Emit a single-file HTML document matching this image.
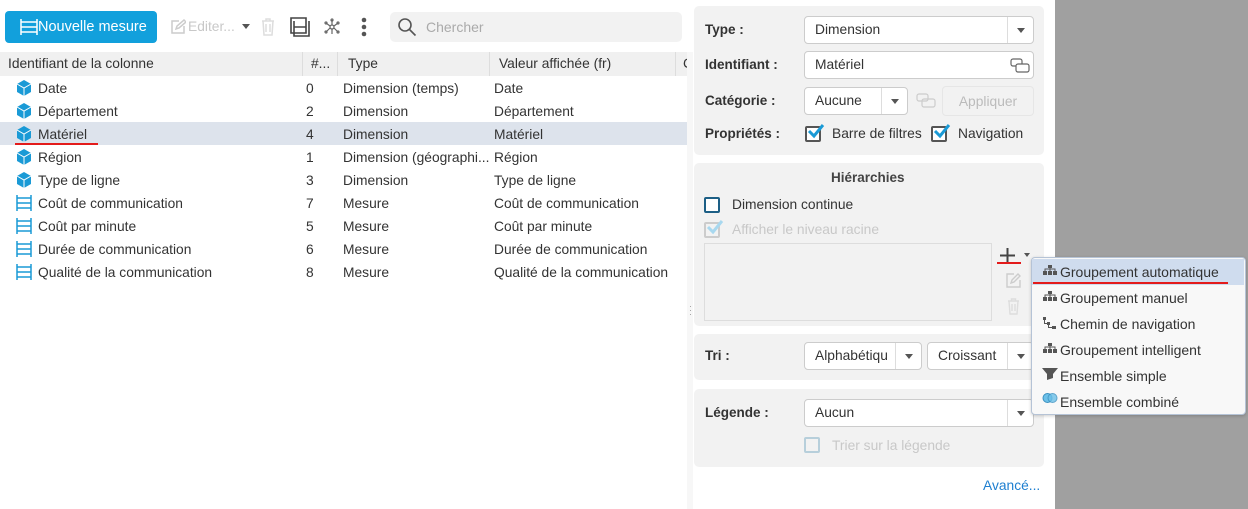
<!DOCTYPE html>
<html><head><meta charset="utf-8"><style>
*{margin:0;padding:0;box-sizing:border-box}
body{width:1248px;height:509px;overflow:hidden;background:#fff;font-family:"Liberation Sans",sans-serif;font-size:13.8px;color:#333;position:relative}
.a{position:absolute;white-space:nowrap}
.row{position:absolute;left:0;width:687px;height:23px;line-height:23px}
.row span{position:absolute;white-space:nowrap}
.panel{position:absolute;left:694px;width:350px;background:#f2f2f2;border-radius:5px}
.lbl{position:absolute;font-weight:bold;color:#333;font-size:13.5px}
.inp{position:absolute;background:#fff;border:1px solid #ccc;border-radius:4px;height:28px;line-height:26px;padding-left:10px;white-space:nowrap}
.dd{position:absolute;right:0;top:0;width:26px;height:26px;border-left:1px solid #ddd}
.dd:after{content:"";position:absolute;left:9px;top:11px;border:4px solid transparent;border-top:5px solid #555}
.cb{position:absolute;width:16px;height:16px;border:2px solid #555;border-radius:2px;background:#fff}
.mi{position:absolute;left:1033px;width:211px;height:26px;line-height:26px;padding-left:27px;color:#333;font-size:14px}
</style></head><body>
<div class="a" style="left:5px;top:11px;width:152px;height:32px;background:#12a0dc;border-radius:4px;color:#fff;font-size:14.5px;line-height:32px;padding-left:33px">Nouvelle mesure</div>
<svg class="a" style="left:20px;top:18px" width="18" height="18" viewBox="0 0 18 18" fill="none" stroke="#fff" stroke-width="1.5"><path d="M1 1v16M17 1v16M1 4h16M1 9h16M1 14h16"/></svg>
<svg class="a" style="left:170px;top:19px" width="16" height="16" viewBox="0 0 16 16" fill="none" stroke="#ccc" stroke-width="1.5"><path d="M9 2H2v12h12V7M6 10l1-3 7-6 2 2-7 6z"/></svg>
<div class="a" style="left:188px;top:19px;color:#c8c8c8">Editer...</div>
<div class="a" style="left:242px;top:24px;border:4px solid transparent;border-top:5px solid #555"></div>
<svg class="a" style="left:261px;top:18px" width="14" height="18" viewBox="0 0 14 18" fill="none" stroke="#ddd" stroke-width="1.5"><path d="M1 3h12M5 3V1h4v2M2 3l1 14h8l1-14M5 6v8M9 6v8"/></svg>
<svg class="a" style="left:290px;top:17px" width="20" height="20" viewBox="0 0 20 20" fill="none" stroke="#444" stroke-width="1.6"><path d="M1 1h15v15H1zM4 4v15h15V4M4 10h12"/></svg>
<svg class="a" style="left:323px;top:18px" width="18" height="18" viewBox="0 0 18 18" fill="none" stroke="#666" stroke-width="1.2"><circle cx="9" cy="9" r="2"/><path d="M9 7V2M9 11v5M7 8L3 5M11 8l4-3M7 10l-4 4M11 10l4 4"/><circle cx="9" cy="2" r="1"/><circle cx="3" cy="5" r="1"/><circle cx="15" cy="5" r="1"/><circle cx="3" cy="14" r="1"/><circle cx="15" cy="14" r="1"/></svg>
<svg class="a" style="left:360px;top:17px" width="8" height="20"><circle cx="4" cy="3" r="2.3" fill="#555"/><circle cx="4" cy="10" r="2.3" fill="#555"/><circle cx="4" cy="17" r="2.3" fill="#555"/></svg>
<div class="a" style="left:390px;top:12px;width:292px;height:30px;background:#f2f2f2;border-radius:5px"></div>
<svg class="a" style="left:397px;top:17px" width="20" height="20" viewBox="0 0 20 20" fill="none" stroke="#555" stroke-width="1.6"><circle cx="8" cy="8" r="6"/><path d="M12.5 12.5l6 6"/></svg>
<div class="a" style="left:426px;top:19px;color:#aaa;font-size:14px">Chercher</div>
<div class="a" style="left:0;top:52px;width:687px;height:24px;background:#f0f0f0"></div>
<div class="a" style="left:302px;top:52px;width:1px;height:24px;background:#ddd"></div>
<div class="a" style="left:337px;top:52px;width:1px;height:24px;background:#ddd"></div>
<div class="a" style="left:489px;top:52px;width:1px;height:24px;background:#ddd"></div>
<div class="a" style="left:675px;top:52px;width:1px;height:24px;background:#ddd"></div>
<div class="a" style="left:8px;top:56px">Identifiant de la colonne</div>
<div class="a" style="left:311px;top:56px">#...</div>
<div class="a" style="left:348px;top:56px">Type</div>
<div class="a" style="left:499px;top:56px">Valeur affichée (fr)</div>
<div class="a" style="left:683px;top:56px;width:4px;overflow:hidden">C</div>
<div class="a" style="left:687px;top:52px;width:6px;height:457px;background:#f7f7f7"></div>
<div class="a" style="left:689px;top:304px;color:#999;font-size:9px;line-height:4px">·<br>·<br>·</div>
<div class="a" style="left:0;top:122px;width:687px;height:23px;background:#dde3ec"></div>
<div class="a" style="left:15px;top:143px;width:83px;height:2px;background:#e31b1b"></div>
<div class="row" style="top:77px"><span style="left:38px">Date</span><span style="left:306px">0</span><span style="left:343px">Dimension (temps)</span><span style="left:494px">Date</span></div>
<div class="row" style="top:100px"><span style="left:38px">Département</span><span style="left:306px">2</span><span style="left:343px">Dimension</span><span style="left:494px">Département</span></div>
<div class="row" style="top:123px"><span style="left:38px">Matériel</span><span style="left:306px">4</span><span style="left:343px">Dimension</span><span style="left:494px">Matériel</span></div>
<div class="row" style="top:146px"><span style="left:38px">Région</span><span style="left:306px">1</span><span style="left:343px;width:146px;overflow:hidden">Dimension (géographi...</span><span style="left:494px">Région</span></div>
<div class="row" style="top:169px"><span style="left:38px">Type de ligne</span><span style="left:306px">3</span><span style="left:343px">Dimension</span><span style="left:494px">Type de ligne</span></div>
<div class="row" style="top:192px"><span style="left:38px">Coût de communication</span><span style="left:306px">7</span><span style="left:343px">Mesure</span><span style="left:494px">Coût de communication</span></div>
<div class="row" style="top:215px"><span style="left:38px">Coût par minute</span><span style="left:306px">5</span><span style="left:343px">Mesure</span><span style="left:494px">Coût par minute</span></div>
<div class="row" style="top:238px"><span style="left:38px">Durée de communication</span><span style="left:306px">6</span><span style="left:343px">Mesure</span><span style="left:494px">Durée de communication</span></div>
<div class="row" style="top:261px"><span style="left:38px">Qualité de la communication</span><span style="left:306px">8</span><span style="left:343px">Mesure</span><span style="left:494px;width:181px;overflow:hidden">Qualité de la communication</span></div>
<svg class="a" style="left:16px;top:80px" width="16" height="200" viewBox="0 0 16 200">
<g id="c"><path d="M8 0L15 4v8l-7 4-7-4V4z" fill="#1a9ad6"/><path d="M1 4l7 4 7-4M8 8v8" stroke="#fff" stroke-width="1" fill="none"/></g>
<use href="#c" y="23"/><use href="#c" y="46"/><use href="#c" y="69"/><use href="#c" y="92"/>
</svg>
<svg class="a" style="left:16px;top:195px" width="16" height="90" viewBox="0 0 16 90" fill="none" stroke="#1a9ad6" stroke-width="1.5">
<g id="ab"><path d="M1 0v16M15 0v16M1 3h14M1 8h14M1 13h14"/></g>
<use href="#ab" y="23"/><use href="#ab" y="46"/><use href="#ab" y="69"/>
</svg>
<div class="panel" style="top:6px;height:149px"></div>
<div class="lbl" style="left:705px;top:22px">Type :</div>
<div class="inp" style="left:804px;top:16px;width:230px">Dimension<div class="dd"></div></div>
<div class="lbl" style="left:705px;top:57px">Identifiant :</div>
<div class="inp" style="left:804px;top:51px;width:230px">Matériel</div>
<svg class="a" style="left:1010px;top:57px" width="20" height="18" viewBox="0 0 20 18" fill="none" stroke="#666" stroke-width="1.2"><rect x="1" y="2" width="11" height="7" rx="2"/><rect x="6" y="7" width="13" height="8" rx="2" fill="#fff"/></svg>
<div class="lbl" style="left:705px;top:93px">Catégorie :</div>
<div class="inp" style="left:804px;top:87px;width:104px">Aucune<div class="dd"></div></div>
<svg class="a" style="left:916px;top:92px" width="20" height="18" viewBox="0 0 20 18" fill="none" stroke="#ccc" stroke-width="1.2"><rect x="1" y="2" width="11" height="7" rx="2"/><rect x="6" y="7" width="13" height="8" rx="2"/></svg>
<div class="a" style="left:942px;top:86px;width:92px;height:30px;border:1px solid #e6e6e6;border-radius:4px;color:#bbb;text-align:center;line-height:30px">Appliquer</div>
<div class="lbl" style="left:705px;top:126px">Propriétés :</div>
<div class="cb" style="left:805px;top:126px"></div>
<svg class="a" style="left:807px;top:124px" width="18" height="16" fill="none" stroke="#1a9ad6" stroke-width="3"><path d="M2 7l5 5 9-11"/></svg>
<div class="a" style="left:832px;top:126px">Barre de filtres</div>
<div class="cb" style="left:931px;top:126px"></div>
<svg class="a" style="left:933px;top:124px" width="18" height="16" fill="none" stroke="#1a9ad6" stroke-width="3"><path d="M2 7l5 5 9-11"/></svg>
<div class="a" style="left:958px;top:126px">Navigation</div>
<div class="panel" style="top:163px;height:163px"></div>
<div class="a" style="left:831px;top:170px;font-weight:bold;color:#444;font-size:13.5px">Hiérarchies</div>
<div class="cb" style="left:704px;top:197px;border-color:#1d5f86"></div>
<div class="a" style="left:732px;top:197px">Dimension continue</div>
<div class="cb" style="left:704px;top:222px;border-color:#ccc;background:#f2f2f2"></div>
<svg class="a" style="left:706px;top:220px" width="18" height="16" fill="none" stroke="#a8d8ef" stroke-width="3"><path d="M2 7l5 5 9-11"/></svg>
<div class="a" style="left:732px;top:222px;color:#c8c8c8">Afficher le niveau racine</div>
<div class="a" style="left:704px;top:243px;width:288px;height:78px;border:1px solid #ddd"></div>
<svg class="a" style="left:999px;top:247px" width="17" height="17" stroke="#444" stroke-width="2"><path d="M8.5 1v15M1 8.5h15"/></svg>
<div class="a" style="left:1024px;top:253px;border:3.5px solid transparent;border-top:4px solid #555"></div>
<div class="a" style="left:997px;top:262px;width:24px;height:2px;background:#e31b1b"></div>
<svg class="a" style="left:1006px;top:273px" width="15" height="15" fill="none" stroke="#ccc" stroke-width="1.4"><path d="M8 1H1v13h13V7M5 10l1-3 6-6 2 2-6 6z"/></svg>
<svg class="a" style="left:1007px;top:298px" width="13" height="17" fill="none" stroke="#ddd" stroke-width="1.4"><path d="M1 3h11M4.5 3V1h4v2M2 3l1 13h7l1-13M5 6v7M8 6v7"/></svg>
<div class="panel" style="top:334px;height:46px"></div>
<div class="lbl" style="left:705px;top:348px">Tri :</div>
<div class="inp" style="left:804px;top:342px;width:118px;overflow:hidden">Alphabétiqu<div class="dd"></div></div>
<div class="inp" style="left:927px;top:342px;width:107px">Croissant<div class="dd"></div></div>
<div class="panel" style="top:389px;height:78px"></div>
<div class="lbl" style="left:705px;top:405px">Légende :</div>
<div class="inp" style="left:804px;top:399px;width:230px">Aucun<div class="dd"></div></div>
<div class="cb" style="left:804px;top:437px;border-color:#b7cfdb;background:#f2f2f2"></div>
<div class="a" style="left:832px;top:438px;color:#c8c8c8">Trier sur la légende</div>
<div class="a" style="left:983px;top:478px;color:#1e7fd0">Avancé...</div>
<div class="a" style="left:1055px;top:0;width:193px;height:509px;background:#a0a0a0"></div>
<div class="a" style="left:1031px;top:257px;width:215px;height:158px;background:#f8f8f8;border:1px solid #b5c3d6;border-radius:4px;box-shadow:0 1px 3px rgba(0,0,0,.2)"></div>
<div class="a" style="left:1032px;top:259px;width:212px;height:26px;background:#cfdcee"></div>
<div class="mi" style="top:259px">Groupement automatique</div>
<div class="a" style="left:1033px;top:282px;width:195px;height:2px;background:#e31b1b"></div>
<div class="mi" style="top:285px">Groupement manuel</div>
<div class="mi" style="top:311px">Chemin de navigation</div>
<div class="mi" style="top:337px">Groupement intelligent</div>
<div class="mi" style="top:363px">Ensemble simple</div>
<div class="mi" style="top:389px">Ensemble combiné</div>
<svg class="a" style="left:1042px;top:264px" width="16" height="150" viewBox="0 0 16 150" fill="#555">
<g id="h"><rect x="6" y="1" width="4" height="3"/><rect x="1" y="7" width="4" height="4"/><rect x="6" y="7" width="4" height="4"/><rect x="11" y="7" width="4" height="4"/><path d="M3 7V5h10v2M8 4v3" stroke="#555" fill="none"/></g>
<use href="#h" y="26"/>
<g transform="translate(0,52)"><rect x="1" y="1" width="3" height="3"/><rect x="5" y="6" width="3" height="3"/><rect x="10" y="10" width="4" height="3"/><path d="M2.5 4v3.5H5M6.5 9v2.5H10" stroke="#555" fill="none"/></g>
<use href="#h" y="78"/>
<path d="M0 104h16l-5 6v4l-6 2v-6z"/>
<circle cx="5.5" cy="134" r="4.5" fill="#6cc0e8" stroke="#3a90c0"/><circle cx="10.5" cy="134" r="4.5" fill="#6cc0e8" stroke="#3a90c0" opacity=".8"/>
</svg>
</body></html>
